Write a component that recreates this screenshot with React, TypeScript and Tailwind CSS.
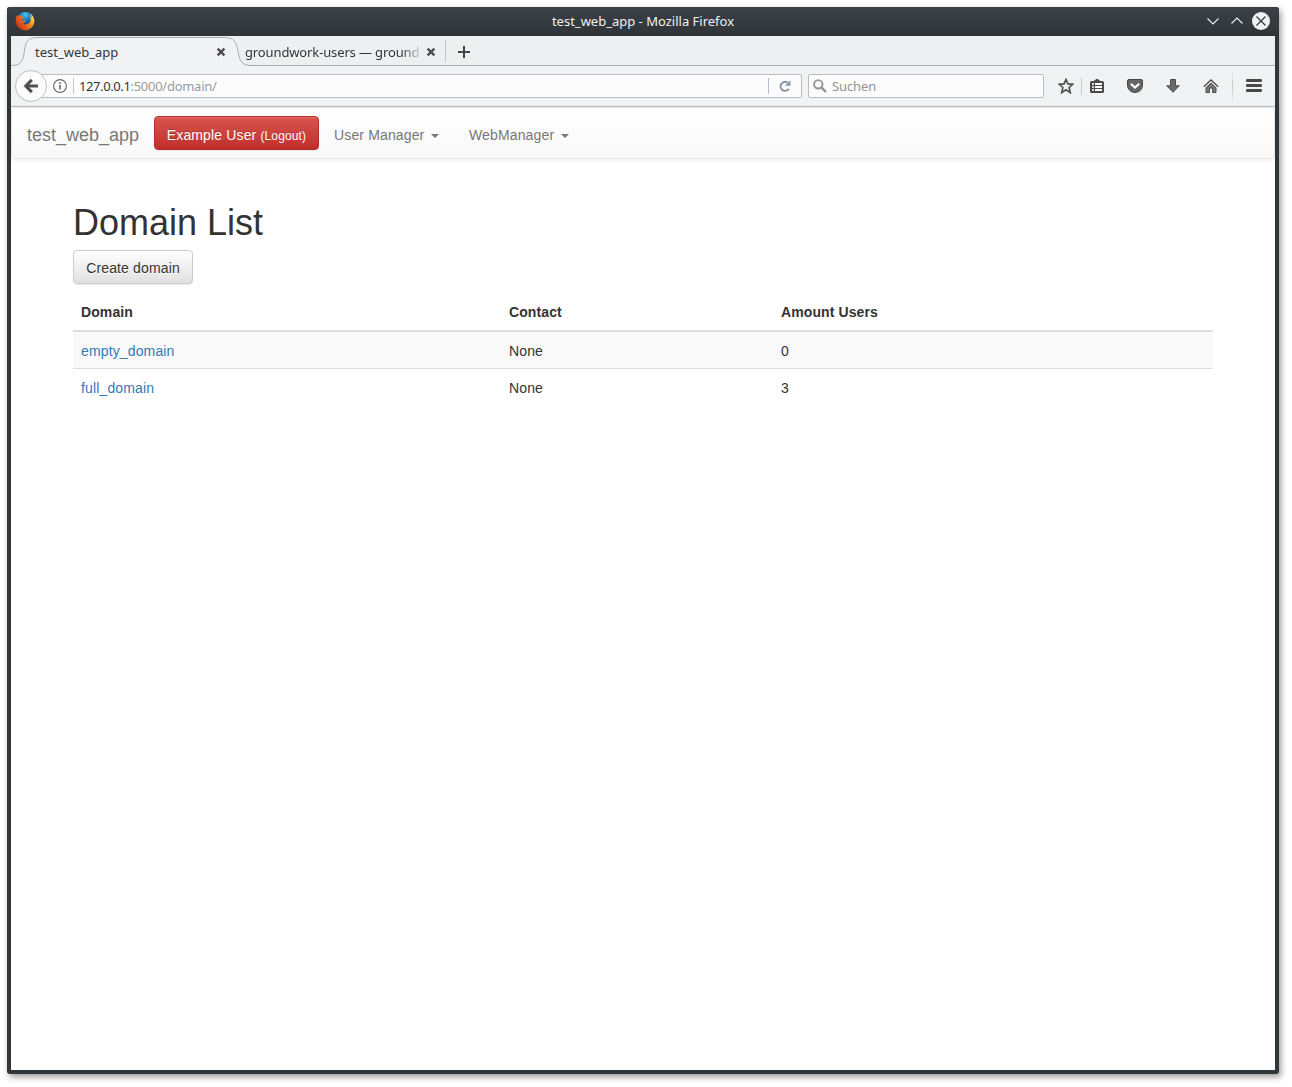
import React from "react";

function FirefoxLogo() {
  return (
    <svg width="20" height="20" viewBox="0 0 20 20" className="mb-px ml-2 block">
      <defs>
        <radialGradient id="globe" cx="0.5" cy="0.15" r="0.8">
          <stop offset="0" stopColor="#4fc4f0" />
          <stop offset="0.45" stopColor="#1b72ba" />
          <stop offset="1" stopColor="#10286a" />
        </radialGradient>
        <linearGradient id="fox" x1="0.95" y1="0.2" x2="0.15" y2="0.8">
          <stop offset="0" stopColor="#ffe85a" />
          <stop offset="0.3" stopColor="#f9a01b" />
          <stop offset="0.65" stopColor="#e8601c" />
          <stop offset="1" stopColor="#c9361b" />
        </linearGradient>
      </defs>
      <circle cx="10.3" cy="9.3" r="8.4" fill="url(#globe)" />
      <path
        d="M1.6 4.2 L3 5.2 C3.6 4.2 4.4 4 5 4 C5 4.8 5.3 5.3 6 5.6 L8.6 5.7 C8.8 6.8 8 7.3 6.8 7.9 C6.7 9 7.2 9.6 8.4 9.5 C9.6 9.2 10.5 9.5 10.9 10.2 C10 10.6 9.6 11.8 8 11.9 C9.8 14.4 14 13.6 15.2 10.6 C16 8.4 15.5 6.6 14.6 5 C15.6 5.6 16.2 6.4 16.5 7.2 C16.6 5 16 3.4 14.8 2.2 C17.8 3.9 19.4 6.9 19.3 10.2 C19.2 15.3 15 19.3 10 19.3 C4.8 19.3 0.7 15.2 0.7 10 C0.7 7.8 1 6 1.6 4.2Z"
        fill="url(#fox)"
      />
    </svg>
  );
}

function TabClose() {
  return (
    <svg width="10" height="10" viewBox="0 0 10 10" className="block shrink-0">
      <path d="M1.6 1.6 L8.4 8.4 M8.4 1.6 L1.6 8.4" stroke="#4c4c4c" strokeWidth="2.3" />
    </svg>
  );
}

function TitleBar() {
  return (
    <div className="grid h-[29px] grid-cols-[1fr_auto_1fr] items-center bg-linear-to-b from-[#3c4148] to-[#2f3437]">
      <FirefoxLogo />
      <div className="pb-0.5 text-[13px] leading-[18px] text-[#eff0f1]">test_web_app - Mozilla Firefox</div>
      <div className="flex items-center justify-end pr-[9px] pb-px">
        <svg width="12" height="12" viewBox="0 0 12 12">
          <path d="M0.5 3.5 L6 9 L11.5 3.5" fill="none" stroke="#eff0f1" strokeWidth="1.1" />
        </svg>
        <svg className="ml-3" width="12" height="12" viewBox="0 0 12 12">
          <path d="M0.5 8.5 L6 3 L11.5 8.5" fill="none" stroke="#eff0f1" strokeWidth="1.1" />
        </svg>
        <svg className="ml-[9px]" width="18" height="18" viewBox="0 0 18 18">
          <circle cx="9" cy="9" r="9" fill="#eff0f1" />
          <path d="M4.5 4.5 L13.5 13.5 M13.5 4.5 L4.5 13.5" stroke="#31363b" strokeWidth="1.2" />
        </svg>
      </div>
    </div>
  );
}

function TabStrip() {
  return (
    <div className="relative flex h-[30px] items-center bg-[#eeeff1] text-[13px] leading-[18px] text-[#31363b]">
      <svg className="absolute inset-0" width="1264" height="30" viewBox="0 0 1264 30">
        <path
          d="M0 29.5 C9 29.5 11.5 26 13 18 C14.5 7 15 1.5 27 1.5 L213 1.5 C224 1.5 225 7 227 15 C228.5 24 230 29.5 240 29.5 L1264 29.5 L1264 30 L0 30Z"
          fill="#f1f2f4"
        />
        <path
          d="M0 29.5 C9 29.5 11.5 26 13 18 C14.5 7 15 1.5 27 1.5 L213 1.5 C224 1.5 225 7 227 15 C228.5 24 230 29.5 240 29.5 L1264 29.5"
          fill="none"
          stroke="#a8abae"
        />
      </svg>
      <div className="relative flex h-full w-[215px] items-center justify-between pt-px pl-6">
        <span>test_web_app</span>
        <TabClose />
      </div>
      <div className="relative ml-[19px] flex h-full w-[191px] items-center justify-between pt-px">
        <span className="w-[175px] tracking-[-0.13px] whitespace-nowrap mask-r-from-[90%] mask-r-to-[102%]">
          groundwork-users — ground
        </span>
        <TabClose />
      </div>
      <div className="relative ml-[9px] h-[22px] w-px bg-[#c3c6c9]" />
      <svg className="relative mt-[2px] ml-[12px]" width="12" height="12" viewBox="0 0 12 12">
        <path d="M6 0 V12 M0 6 H12" stroke="#454545" strokeWidth="2" />
      </svg>
    </div>
  );
}

function NavToolbar() {
  return (
    <div className="flex h-[41px] items-center border-b border-[#b9bdc1] bg-[#f1f2f4] pl-1 text-[13px] leading-[18px]">
      <div className="z-10 flex size-8 shrink-0 items-center justify-center rounded-full border border-[#bcbfc3] bg-[#fcfcfc]">
        <svg width="16" height="16" viewBox="0 0 16 16">
          <path d="M8.8 1.8 L2.8 8 L8.8 14.2 M3.5 8 H15" fill="none" stroke="#505050" strokeWidth="3.1" />
        </svg>
      </div>
      <div className="-ml-[6px] flex h-6 w-[761px] items-center rounded-r-[2px] border border-[#b9bdc1] bg-[#fcfcfc] pl-[11px]">
        <svg width="14" height="14" viewBox="0 0 14 14">
          <circle cx="7" cy="7" r="6.4" fill="none" stroke="#666" strokeWidth="1.1" />
          <path d="M7 6 V10.4 M7 3.2 V4.9" stroke="#666" strokeWidth="1.6" />
        </svg>
        <div className="ml-[6px] h-4 w-px bg-[#c3c6c9]" />
        <div className="ml-[5px] tracking-[-0.27px] text-[#999b9d]">
          <span className="tracking-[-0.4px] text-[#31363b]">127.0.0.1</span>:5000/domain/
        </div>
        <div className="ml-auto h-4 w-px bg-[#b4bec6]" />
        <svg className="mr-[10px] ml-[10px]" width="12" height="12" viewBox="0 0 12 12">
          <path d="M9.8 8.9 A4.5 4.5 0 1 1 8.6 2.6" fill="none" stroke="#8797a5" strokeWidth="2" />
          <path d="M11.5 0.3 V5.8 H6Z" fill="#8797a5" />
        </svg>
      </div>
      <div className="ml-[6px] flex h-6 w-[236px] items-center rounded-[2px] border border-[#b9bdc1] bg-[#fcfcfc] pl-1 text-[#929496]">
        <svg width="14" height="14" viewBox="0 0 14 14">
          <circle cx="5.3" cy="5.3" r="4.2" fill="none" stroke="#929292" strokeWidth="1.9" />
          <path d="M8.3 8.3 L13 13" stroke="#929292" strokeWidth="2.4" />
        </svg>
        <span className="ml-[5px] tracking-[-0.1px]">Suchen</span>
      </div>
      <svg className="ml-[14px]" width="16" height="16" viewBox="0 0 16 16">
        <path
          d="M8 1.4 L9.9 5.9 L14.8 6.3 L11.1 9.5 L12.3 14.6 L8 11.8 L3.7 14.6 L4.9 9.5 L1.2 6.3 L6.1 5.9Z"
          fill="none"
          stroke="#4d4d4d"
          strokeWidth="1.6"
        />
      </svg>
      <div className="ml-[7px] h-[18px] w-px bg-[#c9cbce]" />
      <svg className="ml-2" width="14" height="14" viewBox="0 0 14 14">
        <path d="M3 2.5 L7 -0.5 L11 2.5Z" fill="#4a4a4a" />
        <rect x="0.8" y="2.8" width="12.4" height="10.4" rx="0.8" fill="#4d4d4d" stroke="#4a4a4a" strokeWidth="1.6" />
        <path d="M5 5 H12 M5 8 H12 M5 11 H12" stroke="#fff" strokeWidth="1.9" />
        <path d="M2 5 H4 M2 8 H4 M2 11 H4" stroke="#fff" strokeWidth="1.7" />
      </svg>
      <svg className="ml-[23px]" width="16" height="14" viewBox="0 0 16 14">
        <path
          d="M2 0.5 H14 Q15.5 0.5 15.5 2 V6 C15.5 10.5 12 13.5 8 13.5 S0.5 10.5 0.5 6 V2 Q0.5 0.5 2 0.5Z"
          fill="#666"
          stroke="#454545"
        />
        <path d="M3.8 4.7 L8 8.6 L12.2 4.7" fill="none" stroke="#fff" strokeWidth="2.1" />
      </svg>
      <svg className="ml-[23px]" width="14" height="14" viewBox="0 0 14 14">
        <path d="M4.5 0.5 H9.5 V6.8 H13.3 L7 13.3 L0.7 6.8 H4.5Z" fill="#6a6a6a" stroke="#4d4d4d" />
      </svg>
      <svg className="ml-[23px]" width="16" height="14" viewBox="0 0 16 14">
        <path d="M8 4 L13 8.7 V13.5 H9.6 V9 H6.4 V13.5 H3 V8.7Z" fill="#777" stroke="#4d4d4d" />
        <path d="M0.8 7.7 L8 1 L15.2 7.7" fill="none" stroke="#4a4a4a" strokeWidth="1.3" />
      </svg>
      <div className="ml-[13px] h-9 w-px bg-linear-to-b from-transparent via-[#c5c7ca] to-transparent" />
      <svg className="mb-0.5 ml-[13px]" width="16" height="14" viewBox="0 0 16 14">
        <path d="M1.3 2.5 H14.7 M1.3 7.5 H14.7 M1.3 12.5 H14.7" stroke="#484848" strokeWidth="2.8" strokeLinecap="round" />
      </svg>
    </div>
  );
}

function Caret() {
  return (
    <span className="ml-[7px] inline-block border-x-4 border-t-4 border-x-transparent border-t-[#777] align-middle" />
  );
}

function PageNavbar() {
  return (
    <nav className="flex h-[52px] items-center rounded border border-[#e7e7e7] bg-linear-to-b from-white to-[#f8f8f8] pl-[15px] text-sm leading-5 tracking-[0.14px] text-[#777] shadow-[0_1px_5px_rgba(0,0,0,0.075)] text-shadow-[0_1px_0_rgba(255,255,255,0.25)]">
      <a className="w-[112px] pt-1 text-[18px] tracking-normal whitespace-nowrap">test_web_app</a>
      <a className="ml-[15px] h-[34px] w-[165px] rounded border border-[#b92c28] bg-linear-to-b from-[#d9534f] to-[#c12e2a] pt-2 text-center whitespace-nowrap text-white shadow-[inset_0_1px_0_rgba(255,255,255,0.15),0_1px_1px_rgba(0,0,0,0.075)] text-shadow-[0_-1px_0_rgba(0,0,0,0.2)]">
        Example User <small className="text-[12px]">(Logout)</small>
      </a>
      <a className="ml-[15px] w-[105px] pt-1 whitespace-nowrap">
        User Manager
        <Caret />
      </a>
      <a className="ml-[30px] pt-1 whitespace-nowrap">
        WebManager
        <Caret />
      </a>
    </nav>
  );
}

const domains = [
  { name: "empty_domain", contact: "None", users: 0 },
  { name: "full_domain", contact: "None", users: 3 },
];

function DomainPage() {
  return (
    <main className="mx-[62px] mt-[41px] text-sm leading-5 tracking-[0.14px] text-[#333]">
      <h1 className="h-[40px] text-[36px] leading-[45px] font-normal tracking-normal">Domain List</h1>
      <button className="mt-[10px] block h-[34px] w-[120px] rounded border border-[#ccc] bg-linear-to-b from-white to-[#e0e0e0] pt-0.5 tracking-[0.14px] whitespace-nowrap shadow-[inset_0_1px_0_rgba(255,255,255,0.15),0_1px_1px_rgba(0,0,0,0.075)] text-shadow-[0_1px_0_#fff]">
        Create domain
      </button>
      <table className="mt-[9px] w-full table-fixed border-separate border-spacing-0 text-left">
        <colgroup>
          <col className="w-[428px]" />
          <col className="w-[272px]" />
          <col />
        </colgroup>
        <thead>
          <tr>
            {["Domain", "Contact", "Amount Users"].map((h) => (
              <th key={h} className="h-[39px] border-b-2 border-[#ddd] px-2 font-bold tracking-[0.1px]">
                {h}
              </th>
            ))}
          </tr>
        </thead>
        <tbody>
          {domains.map((d) => (
            <tr key={d.name} className="group odd:bg-[#f9f9f9]">
              <td className="h-[37px] px-2 group-odd:border-b group-odd:border-[#ddd] group-odd:pt-[2px]">
                <a className="text-[#337ab7]">{d.name}</a>
              </td>
              <td className="px-2 group-odd:border-b group-odd:border-[#ddd] group-odd:pt-[2px]">{d.contact}</td>
              <td className="px-2 group-odd:border-b group-odd:border-[#ddd] group-odd:pt-[2px]">{d.users}</td>
            </tr>
          ))}
        </tbody>
      </table>
    </main>
  );
}

export default function App() {
  return (
    <div className="h-[1087px] overflow-hidden bg-white pt-[7px] pl-[7px]">
      <div className="flex h-[1067px] w-[1272px] flex-col overflow-hidden rounded-[3px] bg-[#31363b] shadow-[2px_3px_6px_rgba(0,0,0,0.4)] [font-family:'Noto_Sans',sans-serif]">
        <TitleBar />
        <div className="mx-1 mb-1 flex-1 bg-white">
          <TabStrip />
          <NavToolbar />
          <div className="[font-family:'Liberation_Sans',Arial,sans-serif]">
            <PageNavbar />
            <DomainPage />
          </div>
        </div>
      </div>
    </div>
  );
}
